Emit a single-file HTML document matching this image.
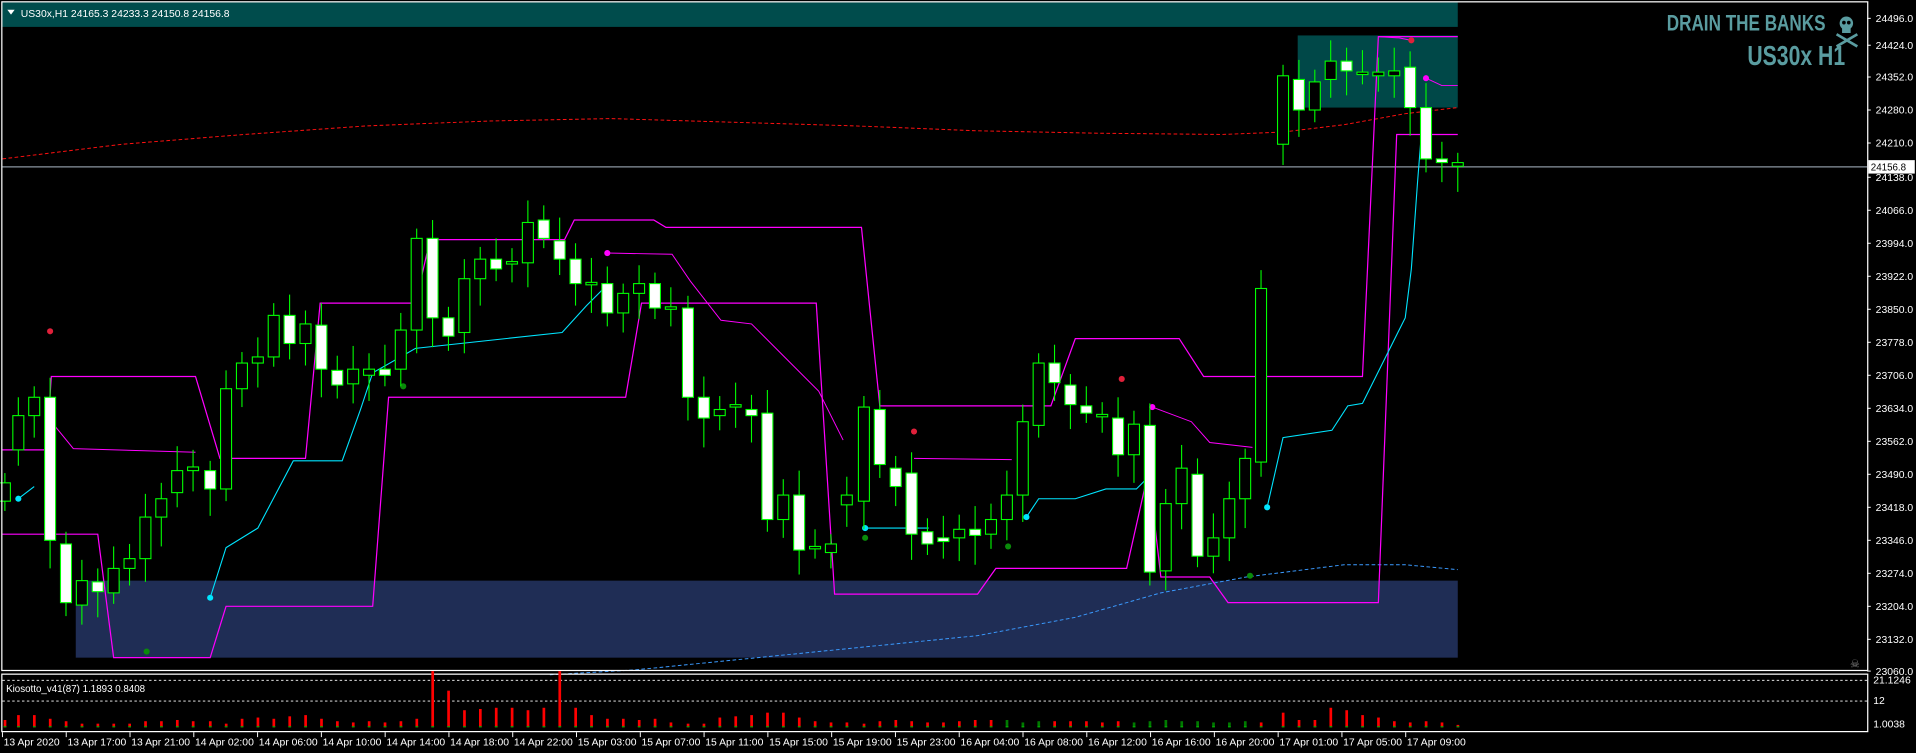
<!DOCTYPE html>
<html><head><meta charset="utf-8"><style>
html,body{margin:0;padding:0;background:#000;overflow:hidden}
svg{display:block}
text{font-family:"Liberation Sans",sans-serif}
</style></head><body>
<svg id="s" width="1916" height="753" viewBox="0 0 1568 616" preserveAspectRatio="none" xmlns="http://www.w3.org/2000/svg">
<rect width="1568" height="616" fill="#000"/>
<rect x="2" y="2" width="1191" height="20" fill="#004c4c"/>
<polygon points="6,8 12,8 9,12" fill="#fff"/>
<text x="17" y="14" font-size="8.5" fill="#fff">US30x,H1  24165.3 24233.3 24150.8 24156.8</text>
<rect x="1062" y="29" width="131" height="59" fill="#004848"/>
<rect x="62" y="475" width="1131" height="63" fill="#1f2d55"/>
<line x1="2" y1="136.5" x2="1528" y2="136.5" stroke="#8a95a0" stroke-width="1"/>
<polyline fill="none" stroke="#ff1010" stroke-width="0.8" stroke-dasharray="3,2" points="2,130 100,118 200,110 300,103 400,99 500,97 600,100 700,103 800,107 900,109 1000,110 1050,108 1100,102 1150,93 1193,88"/>
<polyline fill="none" stroke="#3a9aff" stroke-width="0.8" stroke-dasharray="3,2" points="450,552 520,548 600,540 700,530 800,520 880,505 950,485 1020,472 1060,467 1100,462 1150,462 1193,466"/>
<polyline fill="none" stroke="#ff00ff" stroke-width="1" points="2,368 38,368 42,308 160,308 180,375 250,375 262,248 340,248 352,196 462,196 470,180 535,180 545,186 705,186 720,332 860,332 880,277 965,277 985,308 1115,308 1128,30 1193,30"/>
<polyline fill="none" stroke="#ff00ff" stroke-width="1" points="2,437 80,437 93,538 172,538 185,496 305,496 318,325 512,325 525,248 668,248 683,486 800,486 815,465 922,465 940,385 950,472 990,472 1005,493 1128,493 1143,110 1193,110"/>
<g fill="none" stroke="#ff00ff" stroke-width="0.8">
<polyline points="42,345 60,367 160,370"/>
<polyline points="497,207 550,208 565,230 590,262 615,265 640,290 670,320 690,360"/>
<polyline points="748,375 828,376"/>
<polyline points="943,333 975,345 990,362 1025,366"/>
<polyline points="1128,30 1145,31 1155,33"/>
<polyline points="1167,64 1180,70 1193,70"/>
</g>
<g fill="none" stroke="#00e5ff" stroke-width="0.9">
<polyline points="15,408 28,398"/>
<polyline points="172,489 185,448 211,432 240,377 280,377 295,335 305,305 340,285 460,272 480,250 498,232"/>
<polyline points="708,432 760,432"/>
<polyline points="840,423 850,408 880,408 905,400 930,400 945,385"/>
<polyline points="1037,415 1050,358 1090,352 1103,332 1115,330 1150,260 1155,220 1160,150 1163,112"/>
</g>
<g id="dots"></g>
<g id="candles"></g>
<text x="1364" y="25" font-size="18" font-weight="bold" fill="#5a9ca0" textLength="130" lengthAdjust="spacingAndGlyphs">DRAIN THE BANKS</text>
<text x="1430" y="53" font-size="23" font-weight="bold" fill="#5a9ca0" textLength="80" lengthAdjust="spacingAndGlyphs">US30x H1</text>
<g fill="#5a9ca0" stroke="#5a9ca0">
<circle cx="1511" cy="19" r="5.5" stroke="none"/><rect x="1507.5" y="22" width="7" height="5" stroke="none"/>
<line x1="1503" y1="28" x2="1520" y2="38" stroke-width="2.2"/><line x1="1520" y1="28" x2="1503" y2="38" stroke-width="2.2"/>
</g>
<circle cx="1509" cy="18.5" r="1.5" fill="#000"/><circle cx="1513" cy="18.5" r="1.5" fill="#000"/>
<text x="1514" y="546" font-size="9" fill="#888">☠</text>
<rect x="1.5" y="1.5" width="1527" height="547" fill="none" stroke="#fff" stroke-width="1"/>
<rect x="1.5" y="551.5" width="1527" height="47" fill="none" stroke="#fff" stroke-width="1"/>
<line x1="2" y1="556.5" x2="1528" y2="556.5" stroke="#fff" stroke-width="0.7" stroke-dasharray="2,2"/>
<line x1="2" y1="573.5" x2="1528" y2="573.5" stroke="#fff" stroke-width="0.7" stroke-dasharray="2,2"/>
<text x="5" y="566" font-size="8" fill="#fff">Kiosotto_v41(87) 1.1893 0.8408</text>
<g id="bars"></g>
<g id="axis" font-size="8.5" fill="#fff"></g>
</svg>
<script>
var NS="http://www.w3.org/2000/svg";
function el(p,t,a){var e=document.createElementNS(NS,t);for(var k in a)e.setAttribute(k,a[k]);document.getElementById(p).appendChild(e);return e;}
var C=[[4,395,410,0],[15,340,368,0],[28,325,340,0],[41,325,442,1],[54,445,493,1],[67,475,495,0],[80,476,484,1],[93,465,485,0],[106,457,465,0],[119,423,457,0],[132,408,423,0],[145,385,403,0],[158,382,385,0],[172,385,400,1],[185,318,400,0],[198,297,318,0],[211,292,297,0],[224,258,292,0],[237,258,281,1],[250,265,281,0],[263,266,302,1],[276,303,315,1],[289,302,314,0],[302,302,307,0],[315,302,307,1],[328,270,302,0],[341,195,270,0],[354,195,260,1],[367,260,275,1],[380,228,272,0],[393,212,228,0],[406,212,220,1],[419,214,216,0],[432,182,215,0],[445,180,195,1],[458,197,212,1],[471,212,232,1],[484,231,233,0],[497,232,256,1],[510,240,256,0],[523,232,240,0],[536,232,252,1],[549,251,253,0],[563,252,325,1],[576,325,342,1],[589,335,340,0],[602,331,333,0],[615,335,340,1],[628,338,425,1],[641,405,425,0],[654,405,450,1],[667,447,449,0],[680,445,452,0],[693,405,413,0],[707,333,410,0],[720,335,380,1],[733,383,398,1],[746,387,437,1],[759,435,445,1],[772,440,443,1],[785,433,440,0],[798,433,438,1],[811,425,437,0],[824,405,425,0],[837,345,405,0],[850,297,348,0],[863,297,313,1],[876,315,331,1],[889,332,338,1],[902,339,341,0],[915,342,372,1],[928,347,372,0],[941,348,468,1],[954,412,467,0],[967,383,412,0],[980,388,455,1],[993,440,455,0],[1006,408,440,0],[1019,375,408,0],[1032,236,378,0],[1050,62,118,0],[1063,65,90,1],[1076,67,90,0],[1089,50,65,0],[1102,50,58,1],[1115,59,61,0],[1128,59,62,0],[1141,58,62,0],[1154,55,88,1],[1167,88,130,1],[1180,130,133,1],[1193,133,136,0]];
C.forEach(function(c,i){
 var h=c[1]-8-(i*7%13),l=c[2]+8+(i*5%17);
 el("candles","line",{x1:c[0],x2:c[0],y1:Math.max(h,25),y2:l,stroke:"#00ff00","stroke-width":0.9});
 el("candles","rect",{x:c[0]-4.5,y:c[1],width:9,height:Math.max(c[2]-c[1],1),fill:c[3]?"#fff":"#000",stroke:"#00ff00","stroke-width":0.9});
 var bh=[6,10,10,7,5,3,3,3,3,5,5,6,5,5,3,7,8,7,9,10,7,5,4,5,4,5,7,15,30,14,15,16,16,14,16,30,16,10,7,7,6,7,4,3,3,8,9,10,12,12,8,5,4,4,3,5,6,5,4,4,5,6,6,6,4,5,5,5,5,4,5,4,5,6,5,5,4,4,5,4,12,6,6,16,14,10,8,5,4,5,4,2,2][i]||4;
 if(i==27||i==35)bh=46;
 var cl=(i>70&&i<79)||(i>62&&i<66)?"#007a00":"#ff0000";
 el("bars","rect",{x:c[0]-1,y:595-bh,width:2.2,height:bh,fill:cl});
 el("bars","rect",{x:c[0]-1,y:594,width:2.2,height:1,fill:"#0a0"});
});
[[41,271,"#e0203a"],[250,274,"#e0203a"],[748,353,"#e0203a"],[918,310,"#e0203a"],[1155,33,"#e0203a"],[497,207,"#ff00ff"],[42,345,"#ff00ff"],[943,333,"#ff00ff"],[1167,64,"#ff00ff"],[15,408,"#00e5ff"],[172,489,"#00e5ff"],[708,432,"#00e5ff"],[840,423,"#00e5ff"],[1037,415,"#00e5ff"],[120,533,"#0a8a0a"],[330,316,"#0a8a0a"],[708,440,"#0a8a0a"],[825,447,"#0a8a0a"],[1023,471,"#0a8a0a"]].forEach(function(d){el("dots","circle",{cx:d[0],cy:d[1],r:2.5,fill:d[2]});});
var P=[["24496.0",15],["24424.0",37],["24352.0",63],["24280.0",90],["24210.0",117],["24138.0",145],["24066.0",172],["23994.0",199],["23922.0",226],["23850.0",253],["23778.0",280],["23706.0",307],["23634.0",334],["23562.0",361],["23490.0",388],["23418.0",415],["23346.0",442],["23274.0",469],["23204.0",496],["23132.0",523],["23060.0",549]];
P.forEach(function(p){el("axis","line",{x1:1528,x2:1531,y1:p[1],y2:p[1],stroke:"#fff","stroke-width":0.8});var t=el("axis","text",{x:1535,y:p[1]+3});t.textContent=p[0];});
el("axis","rect",{x:1529,y:131,width:38,height:11,fill:"#fff"});var t=el("axis","text",{x:1531,y:139.5,fill:"#000","font-size":"8"});t.textContent="24156.8";
[["21.1246",559],["12",576],["1.0038",595]].forEach(function(p){var t=el("axis","text",{x:1533,y:p[1]});t.textContent=p[0];});
var T=["13 Apr 2020","13 Apr 17:00","13 Apr 21:00","14 Apr 02:00","14 Apr 06:00","14 Apr 10:00","14 Apr 14:00","14 Apr 18:00","14 Apr 22:00","15 Apr 03:00","15 Apr 07:00","15 Apr 11:00","15 Apr 15:00","15 Apr 19:00","15 Apr 23:00","16 Apr 04:00","16 Apr 08:00","16 Apr 12:00","16 Apr 16:00","16 Apr 20:00","17 Apr 01:00","17 Apr 05:00","17 Apr 09:00"];
T.forEach(function(s,i){var x=2+i*52.2;el("axis","line",{x1:x,x2:x,y1:599,y2:603,stroke:"#fff","stroke-width":0.8});var t=el("axis","text",{x:x+1,y:610});t.textContent=s;});
</script>
</body></html>
